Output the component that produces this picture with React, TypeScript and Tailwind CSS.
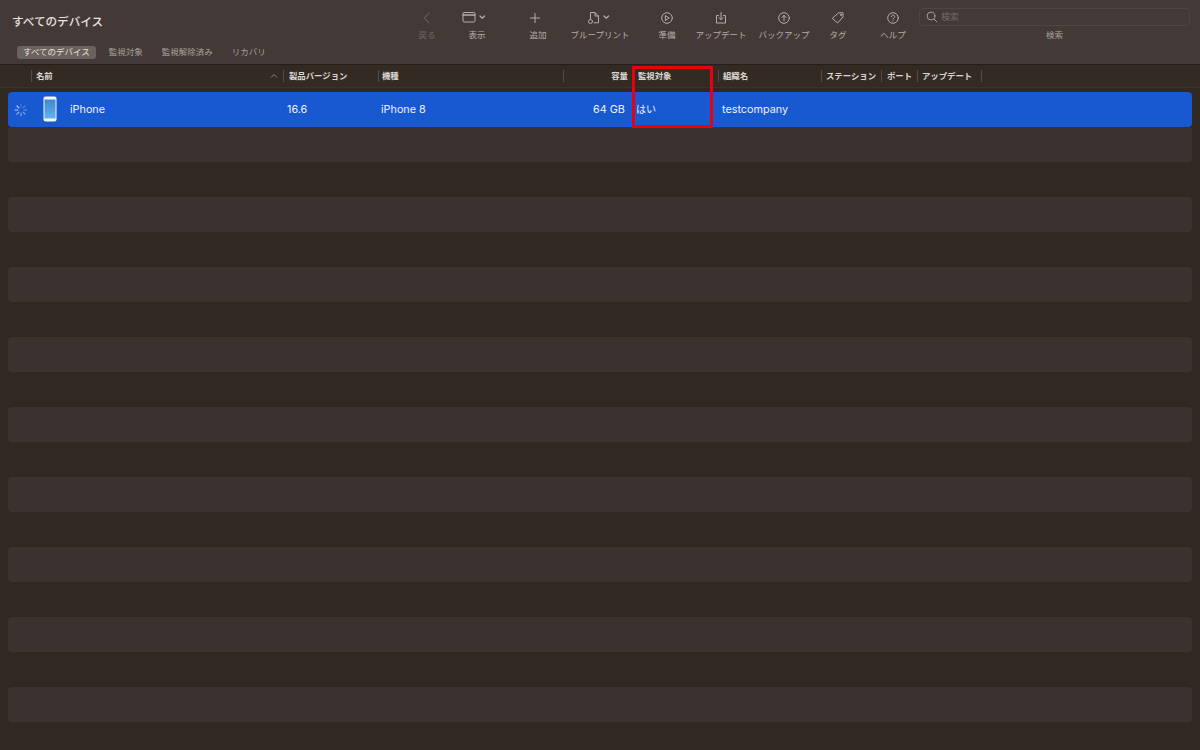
const font = "font-['Inter','Noto_Sans_CJK_JP',sans-serif]";

const BackIcon = () => (
  <svg width="20" height="16" viewBox="0 0 20 16" fill="none" stroke="currentColor" strokeWidth="1" strokeLinecap="round" strokeLinejoin="round">
    <path d="M12 3 L7.5 8 L12 13" />
  </svg>
);

const WindowIcon = () => (
  <svg width="32" height="16" viewBox="0 0 32 16" fill="none" stroke="currentColor" strokeWidth="1" strokeLinecap="round" strokeLinejoin="round">
    <rect x="2" y="2.5" width="12" height="9.5" rx="1.2" />
    <path d="M2 5 H14" strokeWidth="1.4" />
    <path d="M19 6 L21.3 8.2 L23.6 6" strokeWidth="1.2" />
  </svg>
);

const PlusIcon = () => (
  <svg className="-ml-[7px]" width="16" height="16" viewBox="0 0 16 16" fill="none" stroke="currentColor" strokeWidth="1" strokeLinecap="round">
    <path d="M8 3.5 V12.5 M3.5 8 H12.5" />
  </svg>
);

const BlueprintIcon = () => (
  <svg width="26" height="16" viewBox="0 0 26 16" fill="none" stroke="currentColor" strokeWidth="1" strokeLinecap="round" strokeLinejoin="round">
    <path d="M3.5 9 V2.5 H8 L11.5 6 V12.8 H7" />
    <path d="M8 2.5 V6 H11.5" />
    <circle cx="3.5" cy="11.5" r="2" />
    <path d="M17 6 L19.3 8.2 L21.6 6" strokeWidth="1.2" />
  </svg>
);

const PrepareIcon = () => (
  <svg width="16" height="16" viewBox="0 0 16 16" fill="none" stroke="currentColor" strokeWidth="1" strokeLinecap="round" strokeLinejoin="round">
    <circle cx="8" cy="8" r="5.3" />
    <path d="M6.7 5.8 L10.2 8 L6.7 10.2 Z" />
  </svg>
);

const UpdateIcon = () => (
  <svg width="16" height="16" viewBox="0 0 16 16" fill="none" stroke="currentColor" strokeWidth="1" strokeLinecap="round" strokeLinejoin="round">
    <path d="M5.5 5.5 H3.5 V13 H12.5 V5.5 H10.5" />
    <path d="M8 2.5 V9.5 M5.8 7.5 L8 9.7 L10.2 7.5" />
  </svg>
);

const BackupIcon = () => (
  <svg width="16" height="16" viewBox="0 0 16 16" fill="none" stroke="currentColor" strokeWidth="1" strokeLinecap="round" strokeLinejoin="round">
    <circle cx="8" cy="8" r="5.3" />
    <path d="M8 10.8 V5.5 M5.9 7.5 L8 5.3 L10.1 7.5" />
  </svg>
);

const TagIcon = () => (
  <svg width="16" height="16" viewBox="0 0 16 16" fill="none" stroke="currentColor" strokeWidth="1" strokeLinecap="round" strokeLinejoin="round">
    <path d="M9 2.8 H13 V7 L7.6 13 L2.6 8.6 Z" />
    <circle cx="10.9" cy="4.9" r="0.6" />
  </svg>
);

const HelpIcon = () => (
  <svg width="16" height="16" viewBox="0 0 16 16" fill="none" stroke="currentColor" strokeWidth="1" strokeLinecap="round" strokeLinejoin="round">
    <circle cx="8" cy="8" r="5.3" />
    <path d="M6.4 6.6 C6.4 4.6 9.7 4.6 9.7 6.6 C9.7 7.8 8 7.8 8 9.2" />
    <path d="M8 10.9 V11" />
  </svg>
);

const SearchIcon = () => (
  <svg width="14" height="14" viewBox="0 0 14 14" fill="none" stroke="currentColor" strokeWidth="1" strokeLinecap="round">
    <circle cx="6" cy="6" r="3.9" />
    <path d="M8.9 8.9 L12 12" />
  </svg>
);

const Spinner = () => (
  <svg width="14" height="14" viewBox="0 0 14 14" fill="none" strokeWidth="1.1" strokeLinecap="round">
    {[0, 45, 90, 135, 180, 225, 270, 315].map((a, i) => (
      <path
        key={a}
        d="M7 1.2 V4"
        stroke="#d5e2f7"
        strokeOpacity={0.25 + i * 0.1}
        transform={`rotate(${a} 7 7)`}
      />
    ))}
  </svg>
);

const PhoneIcon = () => (
  <svg width="14" height="26" viewBox="0 0 14 26">
    <defs>
      <linearGradient id="screen" x1="0" y1="0" x2="0" y2="1">
        <stop offset="0" stopColor="#3f86cf" />
        <stop offset="1" stopColor="#62b4ee" />
      </linearGradient>
    </defs>
    <rect x="0.5" y="0.5" width="13" height="25" rx="2" fill="#f3f5f8" />
    <rect x="1.5" y="3.5" width="11" height="19" fill="url(#screen)" />
  </svg>
);

const tools = [
  { label: "戻る", icon: <BackIcon />, cls: "text-[#6f6763]", ml: "ml-0" },
  { label: "表示", icon: <WindowIcon />, cls: "text-[#b3aeab]", ml: "ml-0" },
  { label: "追加", icon: <PlusIcon />, cls: "text-[#b3aeab]", ml: "ml-[11px]" },
  { label: "ブループリント", icon: <BlueprintIcon />, cls: "text-[#b3aeab]", ml: "ml-[12px]" },
  { label: "準備", icon: <PrepareIcon />, cls: "text-[#b3aeab]", ml: "ml-[17px]" },
  { label: "アップデート", icon: <UpdateIcon />, cls: "text-[#b3aeab]", ml: "ml-[4px]" },
  { label: "バックアップ", icon: <BackupIcon />, cls: "text-[#b3aeab]", ml: "ml-[13px]" },
  { label: "タグ", icon: <TagIcon />, cls: "text-[#b3aeab]", ml: "ml-[4px]" },
  { label: "ヘルプ", icon: <HelpIcon />, cls: "text-[#b3aeab]", ml: "ml-[5px]" },
];

const columns = [
  { label: "", cls: "w-[31px]" },
  { label: "名前", cls: "w-[252px] border-l pl-[4px]" },
  { label: "製品バージョン", cls: "w-[95px] border-l pl-[5px]" },
  { label: "機種", cls: "w-[185px] border-l pl-[3px]" },
  { label: "容量", cls: "w-[70px] border-l justify-end pr-[5px]" },
  { label: "監視対象", cls: "w-[85px] pl-[5px]" },
  { label: "組織名", cls: "w-[103px] border-l pl-[4px]" },
  { label: "ステーション", cls: "w-[60px] border-l pl-[4px]" },
  { label: "ポート", cls: "w-[36px] border-l pl-[5px]" },
  { label: "アップデート", cls: "w-[64px] border-l pl-[4px]" },
  { label: "", cls: "w-[10px] border-l" },
];

const rows = Array.from({ length: 18 }, (_, i) => i);

export default function App() {
  return (
    <div className={`relative h-[750px] w-[1200px] overflow-hidden bg-[#302823] ${font}`}>
      <div className="flex h-[64px] bg-[#433a37]">
        <div className="w-[402px] shrink-0 pl-[12px]">
          <h1 className="mt-[14px] text-[11.6px] leading-[17px] font-medium text-[#e4e1df]">すべてのデバイス</h1>
          <div className="mt-[15px] flex items-center gap-[7px] pl-[5px] text-[8.5px] text-[#a5a09d]">
            <span className="rounded-[3px] bg-[#6a625e] px-[6px] py-[1px] leading-[11px] text-[#e4e1df]">すべてのデバイス</span>
            <span className="px-[6px]">監視対象</span>
            <span className="px-[6px]">監視解除済み</span>
            <span className="px-[6px]">リカバリ</span>
          </div>
        </div>
        <div className="flex w-[517px] shrink-0 pt-[10px]">
          {tools.map((t) => (
            <div key={t.label} className={`flex w-[50px] shrink-0 flex-col items-center ${t.ml} ${t.cls}`}>
              <div className="flex h-[16px] items-center">{t.icon}</div>
              <span className="mt-[3px] text-[8.5px] leading-[12px] whitespace-nowrap">{t.label}</span>
            </div>
          ))}
        </div>
        <div className="w-[271px] shrink-0 pt-[8px]">
          <div className="flex h-[18px] items-center gap-[2px] rounded-[4px] border border-[#4e4643] pl-[5px] text-[#a5a09d]">
            <SearchIcon />
            <span className="text-[9px] text-[#716966]">検索</span>
          </div>
          <p className="mt-[3px] text-center text-[8.5px] leading-[12px] text-[#a5a09d]">検索</p>
        </div>
      </div>

      <div className="flex h-[23px] border-t border-[#261f1b] bg-[#342a24]">
        {columns.map((c, i) => (
          <div key={i} className={`relative my-[5px] flex shrink-0 items-center border-[#544b46] text-[8.4px] font-semibold whitespace-nowrap text-[#d9d6d3] ${c.cls}`}>
            {c.label}
            {c.label === "名前" && (
              <svg className="absolute right-[5px] top-[3px] text-[#8f8985]" width="8" height="6" viewBox="0 0 8 6" fill="none" stroke="currentColor" strokeWidth="0.9">
                <path d="M1 4.5 L4 1.5 L7 4.5" />
              </svg>
            )}
          </div>
        ))}
      </div>
      <div className="h-[1px] bg-[#3a322d]"></div>

      <div className="flex flex-col px-[8px] pt-[4px]">
        {rows.map((i) => {
          if (i === 0) {
            return (
              <div key={i} className="flex h-[35px] items-center rounded-[4px] bg-[#1858d1] text-[10.8px] text-[#eef3fb]">
                <div className="flex w-[27px] shrink-0 justify-start pl-[6px]"><Spinner /></div>
                <div className="-mt-[1px] flex w-[35px] shrink-0 pl-[8px]"><PhoneIcon /></div>
                <span className="mt-[1px] w-[217px] shrink-0">iPhone</span>
                <span className="mt-[1px] w-[94px] shrink-0">16.6</span>
                <span className="mt-[1px] w-[212px] shrink-0">iPhone 8</span>
                <span className="mt-[1px] w-[31px] shrink-0 whitespace-nowrap text-right">64 GB</span>
                <span className="ml-[12px] w-[86px] shrink-0 text-[10px]">はい</span>
                <span className="mt-[1px] shrink-0">testcompany</span>
              </div>
            );
          }
          return <div key={i} className={`h-[35px] shrink-0 rounded-[4px] ${i % 2 === 1 ? "bg-[#3a322e]" : ""}`}></div>;
        })}
      </div>

      {/* highlight added over the screenshot */}
      <div className="absolute left-[632px] top-[66px] h-[62px] w-[81px] border-[3px] border-[#e8000b]"></div>
    </div>
  );
}
